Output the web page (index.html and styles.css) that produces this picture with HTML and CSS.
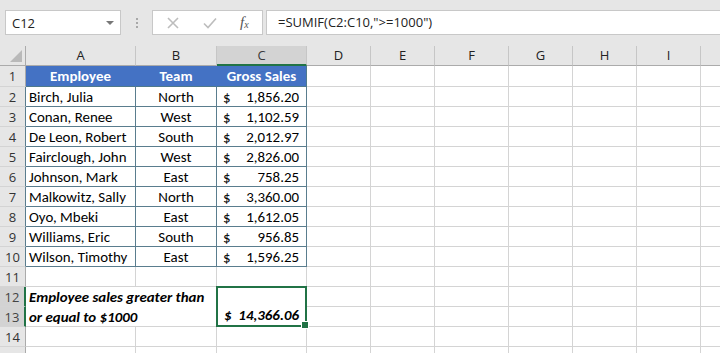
FILE: index.html
```html
<!DOCTYPE html>
<html>
<head>
<meta charset="utf-8">
<link rel="stylesheet" href="styles.css">
</head>
<body>
<div class="app">
  <div class="toolbar">
    <div class="namebox"><span class="nb-text">C12</span><span class="nb-arrow"></span></div>
    <div class="dots"><i></i><i></i><i></i></div>
    <div class="fbtns">
      <svg class="ic" width="14" height="14" viewBox="0 0 14 14"><path d="M2 2 L12 12 M12 2 L2 12" stroke="#bdbdbd" stroke-width="1.6" fill="none"/></svg>
      <svg class="ic" width="16" height="14" viewBox="0 0 16 14"><path d="M2 7.5 L6 11.5 L14 2.5" stroke="#bdbdbd" stroke-width="1.6" fill="none"/></svg>
      <span class="fx">f<sub>x</sub></span>
    </div>
    <div class="formula">=SUMIF(C2:C10,"&gt;=1000")</div>
  </div>
  <div class="sheet">
    <div class="corner"><span class="tri"></span></div>
    <div class="ch">A</div><div class="ch">B</div><div class="ch sel">C</div><div class="ch">D</div><div class="ch">E</div><div class="ch">F</div><div class="ch">G</div><div class="ch">H</div><div class="ch">I</div><div class="ch last"></div>

    <div class="rh r1">1</div>
    <div class="c hd">Employee</div><div class="c hd">Team</div><div class="c hd right-edge">Gross Sales</div>
    <div class="c"></div><div class="c"></div><div class="c"></div><div class="c"></div><div class="c"></div><div class="c"></div><div class="c"></div>

    <div class="rh tbl">2</div>
    <div class="c tb name">Birch, Julia</div><div class="c tb ctr">North</div><div class="c tb money"><span>$</span><span>1,856.20</span></div>
    <div class="c"></div><div class="c"></div><div class="c"></div><div class="c"></div><div class="c"></div><div class="c"></div><div class="c"></div>

    <div class="rh tbl">3</div>
    <div class="c tb name">Conan, Renee</div><div class="c tb ctr">West</div><div class="c tb money"><span>$</span><span>1,102.59</span></div>
    <div class="c"></div><div class="c"></div><div class="c"></div><div class="c"></div><div class="c"></div><div class="c"></div><div class="c"></div>

    <div class="rh tbl">4</div>
    <div class="c tb name">De Leon, Robert</div><div class="c tb ctr">South</div><div class="c tb money"><span>$</span><span>2,012.97</span></div>
    <div class="c"></div><div class="c"></div><div class="c"></div><div class="c"></div><div class="c"></div><div class="c"></div><div class="c"></div>

    <div class="rh tbl">5</div>
    <div class="c tb name">Fairclough, John</div><div class="c tb ctr">West</div><div class="c tb money"><span>$</span><span>2,826.00</span></div>
    <div class="c"></div><div class="c"></div><div class="c"></div><div class="c"></div><div class="c"></div><div class="c"></div><div class="c"></div>

    <div class="rh tbl">6</div>
    <div class="c tb name">Johnson, Mark</div><div class="c tb ctr">East</div><div class="c tb money"><span>$</span><span>758.25</span></div>
    <div class="c"></div><div class="c"></div><div class="c"></div><div class="c"></div><div class="c"></div><div class="c"></div><div class="c"></div>

    <div class="rh tbl">7</div>
    <div class="c tb name">Malkowitz, Sally</div><div class="c tb ctr">North</div><div class="c tb money"><span>$</span><span>3,360.00</span></div>
    <div class="c"></div><div class="c"></div><div class="c"></div><div class="c"></div><div class="c"></div><div class="c"></div><div class="c"></div>

    <div class="rh tbl">8</div>
    <div class="c tb name">Oyo, Mbeki</div><div class="c tb ctr">East</div><div class="c tb money"><span>$</span><span>1,612.05</span></div>
    <div class="c"></div><div class="c"></div><div class="c"></div><div class="c"></div><div class="c"></div><div class="c"></div><div class="c"></div>

    <div class="rh tbl">9</div>
    <div class="c tb name">Williams, Eric</div><div class="c tb ctr">South</div><div class="c tb money"><span>$</span><span>956.85</span></div>
    <div class="c"></div><div class="c"></div><div class="c"></div><div class="c"></div><div class="c"></div><div class="c"></div><div class="c"></div>

    <div class="rh tbl">10</div>
    <div class="c tb name">Wilson, Timothy</div><div class="c tb ctr">East</div><div class="c tb money"><span>$</span><span>1,596.25</span></div>
    <div class="c"></div><div class="c"></div><div class="c"></div><div class="c"></div><div class="c"></div><div class="c"></div><div class="c"></div>

    <div class="rh">11</div>
    <div class="c"></div><div class="c"></div><div class="c"></div><div class="c"></div><div class="c"></div><div class="c"></div><div class="c"></div><div class="c"></div><div class="c"></div><div class="c"></div>

    <div class="rh rsel">12</div>
    <div class="c note">Employee sales greater than<br>or equal to $1000</div>
    <div class="c total"><span>$</span><span>14,366.06</span><i class="handle"></i></div>
    <div class="c"></div><div class="c"></div><div class="c"></div><div class="c"></div><div class="c"></div><div class="c"></div><div class="c"></div>

    <div class="rh rsel">13</div>
    <div class="c"></div><div class="c"></div><div class="c"></div><div class="c"></div><div class="c"></div><div class="c"></div><div class="c"></div>

    <div class="rh">14</div>
    <div class="c"></div><div class="c"></div><div class="c"></div><div class="c"></div><div class="c"></div><div class="c"></div><div class="c"></div><div class="c"></div><div class="c"></div><div class="c"></div>

    <div class="rh">15</div>
    <div class="c"></div><div class="c"></div><div class="c"></div><div class="c"></div><div class="c"></div><div class="c"></div><div class="c"></div><div class="c"></div><div class="c"></div><div class="c"></div>
  </div>
</div>
</body>
</html>
```
FILE: styles.css
```css
* { box-sizing: border-box; }
html, body { margin: 0; padding: 0; }
body { width: 720px; height: 353px; overflow: hidden; background: #fff; }
.app { width: 720px; height: 353px; overflow: hidden; }

.toolbar {
  height: 46px;
  background: #e6e6e6;
  display: flex;
  align-items: flex-start;
  padding-top: 10px;
  padding-left: 5px;
  font-family: "Segoe UI", "Open Sans", "Noto Sans", sans-serif;
  font-size: 13px;
  color: #222;
}
.namebox {
  width: 116px; height: 25px;
  background: #fff; border: 1px solid #c8c8c8;
  display: flex; align-items: center; justify-content: space-between;
  padding: 0 6px 0 6px;
}
.nb-arrow {
  width: 0; height: 0;
  border-left: 4px solid transparent; border-right: 4px solid transparent;
  border-top: 4px solid #777;
}
.dots {
  width: 31px; height: 25px;
  display: flex; flex-direction: column; align-items: center; justify-content: center; gap: 2px;
}
.dots i { display: block; width: 2px; height: 2px; background: #a8a8a8; }
.fbtns {
  width: 111px; height: 25px;
  background: #fff; border: 1px solid #c8c8c8;
  display: flex; align-items: center;
  padding-left: 13px; gap: 22px;
}
.fx {
  font-family: "Liberation Serif", "DejaVu Serif", serif;
  font-style: italic; font-size: 15px; color: #555;
}
.fx sub { font-size: 10px; vertical-align: -1px; }
.formula {
  margin-left: 3px;
  flex: 1; height: 25px;
  background: #fff; border: 1px solid #c8c8c8; border-right: none;
  padding-left: 11px; line-height: 23px;
}

.sheet {
  display: grid;
  grid-template-columns: 26px 110px 81px 90px 64px 64px 74px 64px 64px 64px 40px;
  grid-template-rows: 20px 21px repeat(14, 20px);
  font-family: "Carlito", "Lato", sans-serif;
  font-size: 14.9px;
  color: #000;
}
.corner {
  background: #e6e6e6;
  border-right: 1px solid #ababab; border-bottom: 1px solid #ababab;
  position: relative;
}
.tri {
  position: absolute; right: 3px; bottom: 3px;
  width: 0; height: 0;
  border-left: 12px solid transparent; border-bottom: 12px solid #b9b9b9;
}
.ch {
  background: #e6e6e6;
  border-right: 1px solid #c6c6c6; border-bottom: 1px solid #ababab;
  text-align: center; line-height: 19px; color: #222;
  font-family: "Segoe UI", "Open Sans", sans-serif; font-size: 13px;
}
.ch.sel { background: #d3d3d3; border-bottom: 2px solid #217346; color: #3a3a3a; }
.ch.last { border-right: none; }
.rh {
  background: #e6e6e6;
  border-right: 1px solid #ababab; border-bottom: 1px solid #d4d4d4;
  text-align: center; line-height: 20px; color: #333;
  font-family: "Segoe UI", "Open Sans", sans-serif; font-size: 13px;
}
.rh.tbl { border-right-color: #5a7d8e; }
.rh.r1 { line-height: 21px; }
.rh.rsel { background: #d3d3d3; border-right: 2px solid #217346; color: #444; }
.c {
  border-right: 1px solid #d4d4d4; border-bottom: 1px solid #d4d4d4;
  line-height: 20px; white-space: nowrap;
  padding: 0 3px;
}
.c.hd {
  background: #4472c4; color: #fff; font-weight: bold; text-align: center;
  border-right-color: #4472c4; border-bottom: 1px solid #4f7a8c;
  line-height: 21px;
}
.c.hd.right-edge { border-right: 1px solid #4f7a8c; }
.c.tb { border-right: 1px solid #5a7d8e; border-bottom: 1px solid #5a7d8e; }
.ctr { text-align: center; }
.money { display: flex; justify-content: space-between; padding: 0 7px 0 6px; }
.note {
  grid-column: span 2; grid-row: span 2;
  font-weight: bold; font-style: italic;
  line-height: 20px;
}
.total {
  grid-row: span 2;
  border: 2px solid #217346;
  margin: -1px 0 0 -1px;
  display: flex; justify-content: space-between; align-items: flex-end;
  font-weight: bold; font-style: italic;
  padding: 0 6px 0 6px;
  position: relative;
  line-height: 20px;
}
.handle {
  position: absolute; right: -4px; bottom: -4px;
  width: 6px; height: 6px; background: #217346; border: 1px solid #fff;
  box-sizing: content-box;
}
```
